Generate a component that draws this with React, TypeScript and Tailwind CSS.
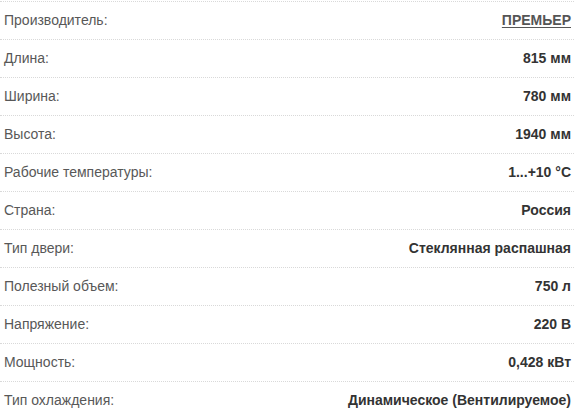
import React from "react";

const rows: [string, string, boolean?][] = [
  ["Производитель:", "ПРЕМЬЕР", true],
  ["Длина:", "815 мм"],
  ["Ширина:", "780 мм"],
  ["Высота:", "1940 мм"],
  ["Рабочие температуры:", "1...+10 °С"],
  ["Страна:", "Россия"],
  ["Тип двери:", "Стеклянная распашная"],
  ["Полезный объем:", "750 л"],
  ["Напряжение:", "220 В"],
  ["Мощность:", "0,428 кВт"],
  ["Тип охлаждения:", "Динамическое (Вентилируемое)"],
];

export default function App() {
  return (
    <div className="bg-white w-[585px] h-[415px] overflow-hidden" style={{ fontFamily: '"Liberation Sans", Arial, sans-serif' }}>
      <div className="w-[574px] pt-px">
        {rows.map(([k, v, link]) => (
          <div key={k} className="flex h-[38px] items-center justify-between border-t border-dotted border-[#d9d9d9] pl-[4px] pr-[3px] text-[14px]">
            <span className="text-[#585858]">{k}</span>
            {link ? (
              <span className="font-bold text-[#555] underline underline-offset-2">{v}</span>
            ) : (
              <span className="font-bold text-[#333]">{v}</span>
            )}
          </div>
        ))}
      </div>
    </div>
  );
}
